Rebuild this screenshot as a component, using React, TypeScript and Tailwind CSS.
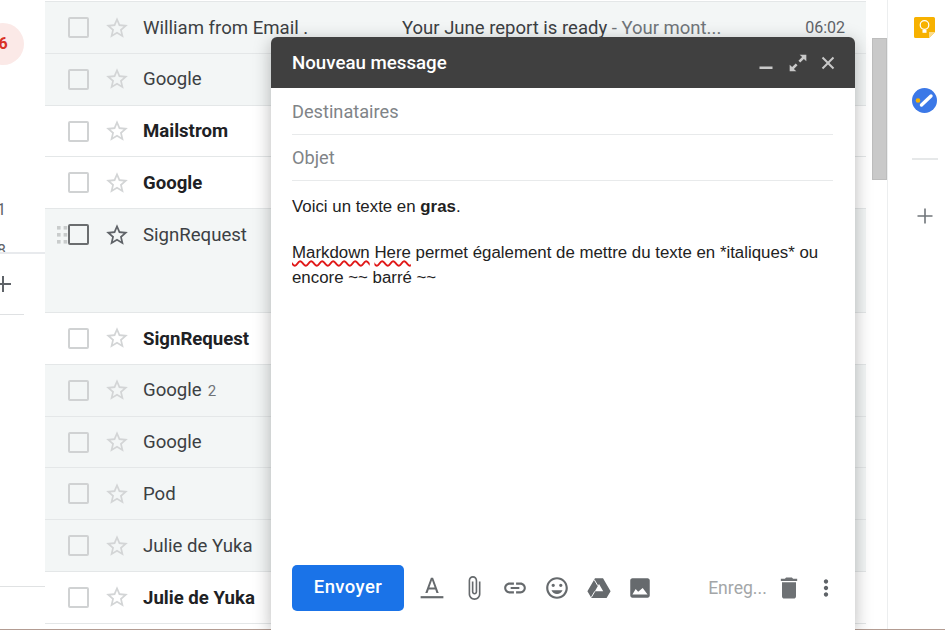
import { ReactNode } from 'react';

const roboto = "font-['Roboto','Liberation_Sans',sans-serif]";

const starPath =
    'M22 9.24l-7.19-.62L12 2 9.19 8.63 2 9.24l5.46 4.73L5.82 21 12 17.27 18.18 21l-1.63-7.03L22 9.24zM12 15.4l-3.76 2.27 1-4.28-3.32-2.88 4.38-.38L12 6.1l1.71 4.04 4.38.38-3.32 2.88 1 4.28L12 15.4z';

interface Row {
    name: string;
    bold?: boolean;
    unread?: boolean;
    hover?: boolean;
    count?: string;
    subject?: string;
    snippet?: string;
    time?: string;
}

const rows: Row[] = [
    {
        name: 'William from Email .',
        subject: 'Your June report is ready',
        snippet: ' - Your mont...',
        time: '06:02',
    },
    { name: 'Google' },
    { name: 'Mailstrom', bold: true, unread: true },
    { name: 'Google', bold: true, unread: true },
    { name: 'SignRequest', hover: true },
    { name: 'SignRequest', bold: true, unread: true },
    { name: 'Google', count: '2' },
    { name: 'Google' },
    { name: 'Pod' },
    { name: 'Julie de Yuka' },
    { name: 'Julie de Yuka', bold: true, unread: true },
];

function Icon({ size = 26, className = '', children }: { size?: number; className?: string; children: ReactNode }) {
    return (
        <svg width={size} height={size} viewBox="0 0 24 24" className={className} fill="currentColor">
            {children}
        </svg>
    );
}

function MailRow({ row }: { row: Row }) {
    return (
        <div
            className={`flex items-start border-b border-[#e4e7e8] ${row.hover ? 'h-[103.8px]' : 'h-[51.8px]'} ${row.unread ? 'bg-white' : 'bg-[#f3f6f6]'}`}
        >
            <div className="flex h-[51px] w-[23px] items-center justify-end">
                {row.hover && (
                    <svg width="11" height="18" viewBox="0 0 11 18" fill="#c9cccc">
                        <rect x="0" y="0" width="3.6" height="3.6" />
                        <rect x="6.6" y="0" width="3.6" height="3.6" />
                        <rect x="0" y="7" width="3.6" height="3.6" />
                        <rect x="6.6" y="7" width="3.6" height="3.6" />
                        <rect x="0" y="14" width="3.6" height="3.6" />
                        <rect x="6.6" y="14" width="3.6" height="3.6" />
                    </svg>
                )}
            </div>
            <div className="flex h-[51px] items-center">
                <div
                    className={`h-[21px] w-[21px] rounded-[2px] border-[2.5px] ${row.hover ? 'border-[#6a6d6f]' : 'border-[#d0d2d3]'}`}
                />
                <div className="ml-[15px] w-[26px]">
                    <Icon size={26} className={row.hover ? 'text-[#5f6368]' : 'text-[#d3d5d6]'}>
                        <path d={starPath} />
                    </Icon>
                </div>
                <div
                    className={`ml-[13px] w-[259px] whitespace-nowrap pt-[2px] text-[18.6px] ${row.bold ? 'font-bold text-[#202124]' : 'text-[#3c4043]'}`}
                >
                    {row.name}
                    {row.count && <span className="ml-[6px] text-[15px] text-[#6f7376]">{row.count}</span>}
                </div>
                {row.subject && (
                    <div className="w-[400px] whitespace-nowrap pt-[2px] text-[18.5px] text-[#3c4043]">
                        {row.subject}
                        <span className="text-[#70757a]">{row.snippet}</span>
                    </div>
                )}
                {row.time && <div className="w-[43px] pt-px text-right text-[16px] text-[#5f6368]">{row.time}</div>}
            </div>
        </div>
    );
}

function Sidebar() {
    return (
        <div className="flex w-[45px] shrink-0 flex-col overflow-hidden bg-white pt-[23px]">
            <div className="-ml-[18px] flex h-[42px] w-[42px] shrink-0 items-center justify-center rounded-full bg-[#fbe9e7] text-[16px] font-bold text-[#d93025]">
                6
            </div>
            <div className="-ml-[3px] h-[187px] shrink-0 overflow-hidden pt-[124px] text-[16px] leading-[41px] text-[#5f6368]">
                <div>1</div>
                <div>8</div>
            </div>
            <div className="flex h-[62px] shrink-0 items-center border-t-2 border-[#e8eaed]">
                <svg width="22" height="22" viewBox="0 0 22 22" className="-ml-[8px] text-[#5f6368]" fill="currentColor">
                    <path d="M10 3h2v7h7v2h-7v7h-2v-7H3v-2h7z" />
                </svg>
            </div>
            <div className="h-px w-[24px] shrink-0 bg-[#dfe1e3]" />
            <div className="h-[272px] shrink-0 border-b border-[#e0e2e3]" />
        </div>
    );
}

function RightPanel() {
    return (
        <div className="flex w-[58px] shrink-0 flex-col items-center border-l border-[#eceeef] bg-white pl-[16px] pt-[17px]">
            <svg width="21" height="21" viewBox="0 0 21 21">
                <path d="M1.5 0h18A1.5 1.5 0 0 1 21 1.5V15l-6 6H1.500A1.500 1.500 0 0 1 0 19.500v-18A1.500 1.500 0 0 1 1.500 0z" fill="#f7b100" />
                <path d="M15 21v-6h6z" fill="#fbdc8a" />
                <circle cx="10.500" cy="8" r="4.300" fill="none" stroke="#fff" strokeWidth="1.200" />
                <rect x="8.500" y="12.800" width="4" height="3" fill="#fff" />
            </svg>
            <svg width="25" height="25" viewBox="0 0 25 25" className="mt-[50px]">
                <circle cx="12.500" cy="12.500" r="12.500" fill="#3b78e7" />
                <path d="M9.500 17L19 8" stroke="#fff" strokeWidth="3.400" strokeLinecap="round" />
                <circle cx="6" cy="12.500" r="2.300" fill="#f7b100" />
            </svg>
            <div className="mt-[45px] h-[2px] w-[26px] bg-[#e6e8e9]" />
            <svg width="22" height="22" viewBox="0 0 22 22" className="mt-[45px] text-[#70757a]" fill="currentColor">
                <path d="M10.200 3.500h1.600v6.700h6.700v1.600h-6.700v6.700h-1.600v-6.700H3.500v-1.600h6.700z" />
            </svg>
        </div>
    );
}

function ToolIcon({ children }: { children: ReactNode }) {
    return <div className="flex w-[41.7px] justify-center text-[#666a6d]">{children}</div>;
}

function Compose() {
    return (
        <div className="absolute left-[271px] top-[37px] flex h-[593px] w-[584px] flex-col overflow-hidden rounded-t-[6px] bg-white shadow-[0_4px_18px_rgba(0,0,0,0.28)]">
            <div className="flex h-[51px] shrink-0 items-center bg-[#404040] pl-[21px] text-[#c9c9c9]">
                <span className="flex-1 pt-px text-[18.7px] font-medium text-white">Nouveau message</span>
                <svg width="16" height="16" viewBox="0 0 16 16" className="mr-[14px]" fill="currentColor">
                    <rect x="1.500" y="11.500" width="13" height="2.500" />
                </svg>
                <svg width="20" height="20" viewBox="0 0 18 18" className="mr-[12px]" fill="currentColor">
                    <path d="M10.500 1.500H16.500v6l-2.200-2.200-3.300 3.300-1.600-1.600 3.300-3.300zM7.500 16.500H1.500v-6l2.200 2.200 3.300-3.300 1.600 1.600-3.300 3.300z" />
                </svg>
                <svg width="16" height="16" viewBox="0 0 16 16" className="mr-[19px]" fill="currentColor">
                    <path d="M3.200 1.800L8 6.600l4.800-4.800 1.400 1.400L9.400 8l4.800 4.800-1.400 1.400L8 9.400l-4.800 4.800-1.400-1.400L6.600 8 1.800 3.200z" />
                </svg>
            </div>
            <div className="ml-[21px] mr-[22px] flex h-[47px] shrink-0 items-center border-b border-[#e8eaeb] pt-[2px] text-[18.2px] text-[#808487]">
                Destinataires
            </div>
            <div className="ml-[21px] mr-[22px] flex h-[46px] shrink-0 items-center border-b border-[#e8eaeb] pt-px text-[18.2px] text-[#808487]">
                Objet
            </div>
            <div className="flex-1 px-[21px] pt-[13px] font-['Liberation_Sans',Arial,sans-serif] text-[16.85px] leading-[25px] text-[#222222]">
                <p>
                    Voici un texte en <b>gras</b>.
                </p>
                <p className="mt-[21px]">
                    <span className="underline decoration-[#e01818] decoration-wavy decoration-[1.5px] underline-offset-2">Markdown</span>{' '}
                    <span className="underline decoration-[#e01818] decoration-wavy decoration-[1.5px] underline-offset-2">Here</span> permet
                    également de mettre du texte en *italiques* ou encore ~~ barré ~~
                </p>
            </div>
            <div className="flex shrink-0 items-center pb-[19px] pl-[21px]">
                <button className="h-[46px] w-[112px] rounded-[5px] bg-[#1a73e8] text-[18.5px] font-medium tracking-[0.4px] text-white">
                    Envoyer
                </button>
                <div className="ml-[7px] flex">
                    <ToolIcon>
                        <Icon>
                            <path d="M11 2.500L5.800 16.500h2.100l1.100-3.200h6l1.100 3.200h2.100L13 2.500h-2zm-1.400 9L12 4.800l2.400 6.700H9.600z" />
                            <rect x="1.500" y="19.500" width="21" height="2" />
                        </Icon>
                    </ToolIcon>
                    <ToolIcon>
                        <Icon>
                            <path d="M16.500 6v11.500c0 2.210-1.790 4-4 4s-4-1.790-4-4V5c0-1.380 1.120-2.500 2.500-2.500s2.500 1.120 2.500 2.500v10.500c0 .55-.45 1-1 1s-1-.45-1-1V6H10v9.500c0 1.380 1.120 2.500 2.500 2.500s2.500-1.120 2.500-2.500V5c0-2.210-1.790-4-4-4S7 2.790 7 5v12.500c0 3.040 2.460 5.500 5.500 5.500s5.500-2.460 5.500-5.500V6h-1.500z" />
                        </Icon>
                    </ToolIcon>
                    <ToolIcon>
                        <Icon>
                            <path d="M3.900 12c0-1.710 1.390-3.100 3.100-3.100h4V7H7c-2.760 0-5 2.240-5 5s2.240 5 5 5h4v-1.900H7c-1.710 0-3.100-1.390-3.100-3.100zM8 13h8v-2H8v2zm9-6h-4v1.900h4c1.710 0 3.100 1.390 3.100 3.100s-1.390 3.100-3.100 3.100h-4V17h4c2.760 0 5-2.240 5-5s-2.240-5-5-5z" />
                        </Icon>
                    </ToolIcon>
                    <ToolIcon>
                        <Icon>
                            <path d="M11.990 2C6.470 2 2 6.480 2 12s4.470 10 9.990 10C17.520 22 22 17.520 22 12S17.520 2 11.990 2zM12 20c-4.420 0-8-3.580-8-8s3.580-8 8-8 8 3.580 8 8-3.580 8-8 8zm3.500-9c.83 0 1.500-.67 1.500-1.500S16.330 8 15.500 8 14 8.670 14 9.500s.67 1.500 1.500 1.500zm-7 0c.83 0 1.500-.67 1.500-1.500S9.330 8 8.500 8 7 8.670 7 9.500 7.670 11 8.500 11zm3.500 6.500c2.330 0 4.310-1.460 5.110-3.500H6.890c.8 2.040 2.780 3.500 5.110 3.500z" />
                        </Icon>
                    </ToolIcon>
                    <ToolIcon>
                        <Icon>
                            <path
                                fillRule="evenodd"
                                d="M8.300 3h7.400l7 12-3.700 6.200H5L1.300 15 8.300 3zM12 8.300L8.200 15h7.700L12 8.300z"
                            />
                            <path d="M7.600 4.300l3.300 5.600M4.800 20.800l3.400-5.800" stroke="#fff" strokeWidth="0.9" fill="none" />
                        </Icon>
                    </ToolIcon>
                    <ToolIcon>
                        <Icon>
                            <path d="M21 19V5c0-1.100-.9-2-2-2H5c-1.100 0-2 .9-2 2v14c0 1.100.9 2 2 2h14c1.100 0 2-.9 2-2zM8 13l2.300 2.500L14.500 12l4.500 6H5l3-5z" />
                        </Icon>
                    </ToolIcon>
                </div>
                <div className="ml-[47px] w-[59px] text-[17.6px] whitespace-nowrap text-[#a3a6a8]">Enreg...</div>
                <Icon size={28} className="ml-[8px] text-[#6e7174]">
                    <path d="M6 19c0 1.100.9 2 2 2h8c1.100 0 2-.9 2-2V7H6v12zM19 4h-3.500l-1-1h-5l-1 1H5v2h14V4z" />
                </Icon>
                <Icon size={26} className="ml-[10px] text-[#5f6368]">
                    <path d="M12 8c1.100 0 2-.9 2-2s-.9-2-2-2-2 .9-2 2 .9 2 2 2zm0 2c-1.100 0-2 .9-2 2s.9 2 2 2 2-.9 2-2-.9-2-2-2zm0 6c-1.100 0-2 .9-2 2s.9 2 2 2 2-.9 2-2-.9-2-2-2z" />
                </Icon>
            </div>
        </div>
    );
}

export default function App() {
    return (
        <div className={`relative flex h-[630px] w-[945px] flex-col overflow-hidden bg-white ${roboto}`}>
            <div className="flex min-h-0 flex-1">
                <Sidebar />
                <div className="w-[821px] shrink-0 overflow-hidden pt-px">
                    <div className="h-px bg-[#e4e7e8]" />
                    {rows.map((row, i) => (
                        <MailRow key={i} row={row} />
                    ))}
                </div>
                <div className="w-[21px] shrink-0 bg-white pl-[6px] pt-[38px]">
                    <div className="h-[142px] w-[15px] border border-[#bdbdbd] bg-[#c9c9c9]" />
                </div>
                <RightPanel />
            </div>
            <div className="h-px shrink-0 bg-[#b39c92]" />
            <Compose />
        </div>
    );
}
